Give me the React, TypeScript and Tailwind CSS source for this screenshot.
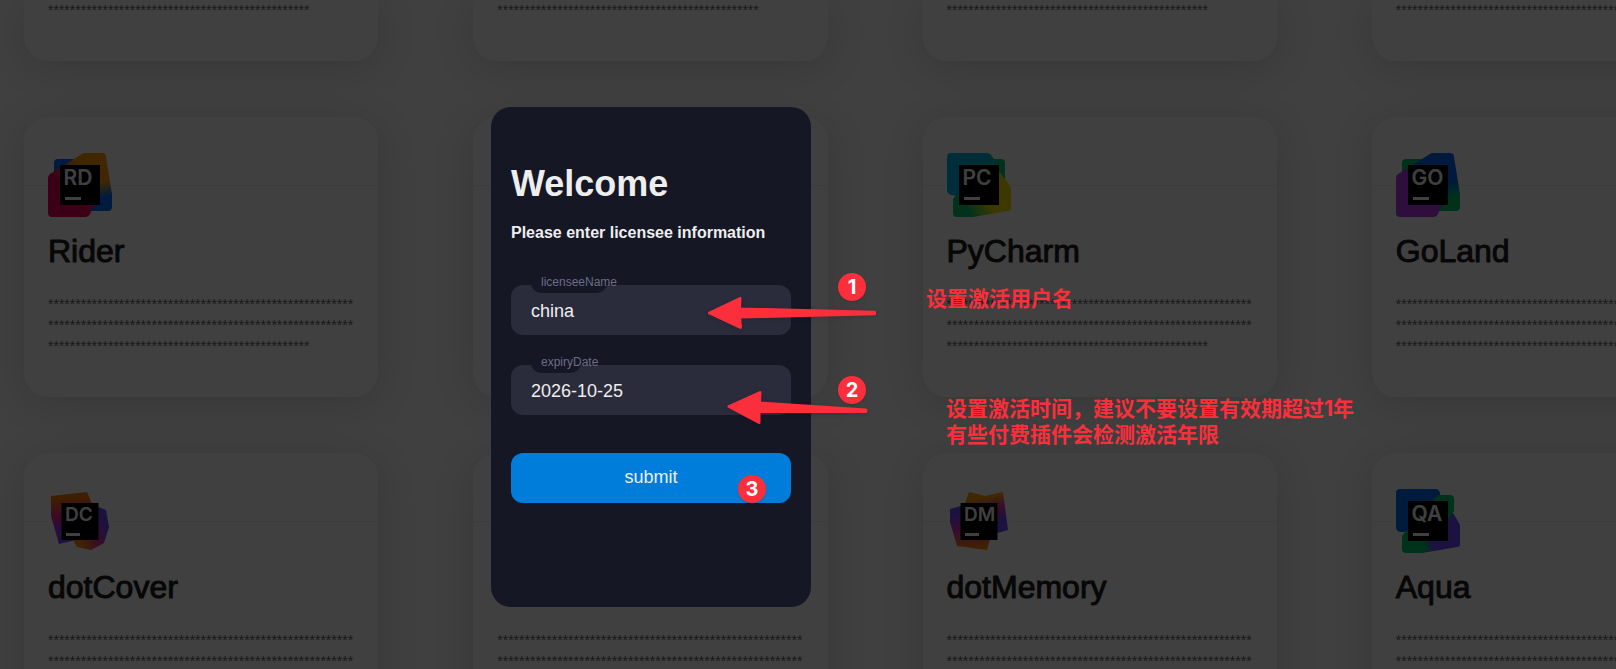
import { useState } from 'react';
import type { ReactNode } from 'react';

type Product = {
  name?: string;
  logo?: ReactNode;
};

function Badge({ letters, small }: { letters: string; small?: boolean }) {
  return small ? (
    <>
      <rect x="13.5" y="14" width="37" height="37" />
      <text x="17" y="32" fontSize="19" fontWeight="600" fill="#fff" fontFamily="Inter, sans-serif">{letters}</text>
      <rect x="18" y="44" width="14" height="3" fill="#fff" />
    </>
  ) : (
    <>
      <rect x="12" y="12" width="40" height="40" />
      <text x="15.500" y="32" fontSize="21" fontWeight="600" fill="#fff" fontFamily="Inter, sans-serif">{letters}</text>
      <rect x="17" y="44" width="16" height="3" fill="#fff" />
    </>
  );
}

function RiderLogo() {
  return (
    <svg viewBox="0 0 64 64" className="size-16">
      <defs>
        <linearGradient id="rd-a" x1="10" y1="56" x2="52" y2="10" gradientUnits="userSpaceOnUse">
          <stop offset=".35" stopColor="#f0005a" />
          <stop offset=".75" stopColor="#ff9a00" />
        </linearGradient>
        <linearGradient id="rd-b" x1="56" y1="20" x2="62" y2="46" gradientUnits="userSpaceOnUse">
          <stop offset=".3" stopColor="#ff9a00" />
          <stop offset=".9" stopColor="#006dff" />
        </linearGradient>
      </defs>
      <path d="M6 10a4 4 0 0 1 4-4h18L24 40H6z" fill="#006dff" />
      <path d="M46 0h8a4 4 0 0 1 4 4l6 37v13a4 4 0 0 1-4 4H40V30z" fill="url(#rd-b)" />
      <path d="M0 25a5 5 0 0 1 2-4L34 1a6 6 0 0 1 3-1h15v40l-10 21a5 5 0 0 1-4 3H4a4 4 0 0 1-4-4z" fill="url(#rd-a)" />
      <Badge letters="RD" />
    </svg>
  );
}

function GoLandLogo() {
  return (
    <svg viewBox="0 0 64 64" className="size-16">
      <defs>
        <linearGradient id="go-a" x1="10" y1="56" x2="52" y2="10" gradientUnits="userSpaceOnUse">
          <stop offset=".4" stopColor="#b33bf0" />
          <stop offset=".7" stopColor="#0066f0" />
        </linearGradient>
        <linearGradient id="go-b" x1="56" y1="20" x2="62" y2="46" gradientUnits="userSpaceOnUse">
          <stop offset=".3" stopColor="#0066f0" />
          <stop offset=".9" stopColor="#00c56b" />
        </linearGradient>
      </defs>
      <path d="M6 10a4 4 0 0 1 4-4h18L24 40H6z" fill="#00c56b" />
      <path d="M46 0h8a4 4 0 0 1 4 4l6 37v13a4 4 0 0 1-4 4H40V30z" fill="url(#go-b)" />
      <path d="M0 25a5 5 0 0 1 2-4L34 1a6 6 0 0 1 3-1h15v40l-10 21a5 5 0 0 1-4 3H4a4 4 0 0 1-4-4z" fill="url(#go-a)" />
      <Badge letters="GO" />
    </svg>
  );
}

function PyCharmLogo() {
  return (
    <svg viewBox="0 0 64 64" className="size-16">
      <defs>
        <linearGradient id="pc-a" x1="16" y1="20" x2="44" y2="40" gradientUnits="userSpaceOnUse">
          <stop offset=".2" stopColor="#00b4e6" />
          <stop offset="1" stopColor="#00c878" />
        </linearGradient>
        <linearGradient id="pc-b" x1="14" y1="56" x2="46" y2="40" gradientUnits="userSpaceOnUse">
          <stop offset=".15" stopColor="#00c870" />
          <stop offset=".8" stopColor="#f0e000" />
        </linearGradient>
      </defs>
      <path d="M40 6h14a4 4 0 0 1 4 4v18H40z" fill="#00c870" />
      <path d="M6 46l6-8 40-20 11 15a6 6 0 0 1 1 3v19a3 3 0 0 1-3 3L26 64H10a4 4 0 0 1-4-4z" fill="url(#pc-b)" />
      <path d="M0 4a4 4 0 0 1 4-4h36a5 5 0 0 1 4 2l8 11-40 30-8-1a5 5 0 0 1-4-5z" fill="url(#pc-a)" />
      <Badge letters="PC" />
    </svg>
  );
}

function AquaLogo() {
  return (
    <svg viewBox="0 0 64 64" className="size-16">
      <defs>
        <linearGradient id="qa-b" x1="14" y1="56" x2="46" y2="48" gradientUnits="userSpaceOnUse">
          <stop offset=".4" stopColor="#00c56b" />
          <stop offset=".7" stopColor="#6b47ff" />
        </linearGradient>
      </defs>
      <path d="M50 24h7l6 10a6 6 0 0 1 1 3v18a3 3 0 0 1-3 3L26 64H10a4 4 0 0 1-4-4V47l6-8z" fill="url(#qa-b)" />
      <path d="M0 4a4 4 0 0 1 4-4h36a5 5 0 0 1 4 4v10L14 40l-6 3H5a5 5 0 0 1-5-4z" fill="#006bef" />
      <path d="M36 12l5-5a4 4 0 0 1 3-1h10a4 4 0 0 1 4 4v12l-6 9z" fill="#00c56b" />
      <Badge letters="QA" />
    </svg>
  );
}

function DotCoverLogo() {
  return (
    <svg viewBox="0 0 64 64" className="size-16">
      <defs>
        <linearGradient id="dc-a" x1="20" y1="2" x2="24" y2="56" gradientUnits="userSpaceOnUse">
          <stop offset=".12" stopColor="#ff7a00" />
          <stop offset=".45" stopColor="#f0288c" />
          <stop offset=".65" stopColor="#a834e0" />
          <stop offset=".9" stopColor="#6b47ff" />
        </linearGradient>
        <linearGradient id="dc-b" x1="28" y1="50" x2="62" y2="38" gradientUnits="userSpaceOnUse">
          <stop offset=".1" stopColor="#ff8a00" />
          <stop offset=".5" stopColor="#f03090" />
          <stop offset=".9" stopColor="#6b47ff" />
        </linearGradient>
      </defs>
      <path d="M3 7l36-4 5 12-16 36-17 4-8-28z" fill="url(#dc-a)" />
      <path d="M50 18l8 3 3 17-5 16-13 7-14-3-4-7 24-14z" fill="url(#dc-b)" />
      <Badge letters="DC" small />
    </svg>
  );
}

function DotMemoryLogo() {
  return (
    <svg viewBox="0 0 64 64" className="size-16">
      <defs>
        <linearGradient id="dm-a" x1="40" y1="4" x2="46" y2="42" gradientUnits="userSpaceOnUse">
          <stop offset=".1" stopColor="#ffa000" />
          <stop offset=".4" stopColor="#e034b0" />
          <stop offset=".75" stopColor="#6b47ff" />
        </linearGradient>
        <linearGradient id="dm-b" x1="16" y1="20" x2="20" y2="60" gradientUnits="userSpaceOnUse">
          <stop offset=".1" stopColor="#6b47ff" />
          <stop offset=".55" stopColor="#e034b0" />
          <stop offset="1" stopColor="#ff8a00" />
        </linearGradient>
      </defs>
      <path d="M22 3l16 4 18-4 5 38-14 4-30-28z" fill="url(#dm-a)" />
      <path d="M3 20l15-4 25 34-3 11-30-4-7-24z" fill="url(#dm-b)" />
      <Badge letters="DM" small />
    </svg>
  );
}

const products: Product[] = [
  { name: 'Rider', logo: <RiderLogo /> },
  {},
  { name: 'PyCharm', logo: <PyCharmLogo /> },
  { name: 'GoLand', logo: <GoLandLogo /> },
  { name: 'dotCover', logo: <DotCoverLogo /> },
  {},
  { name: 'dotMemory', logo: <DotMemoryLogo /> },
  { name: 'Aqua', logo: <AquaLogo /> },
];

const cardShadow = 'shadow-[0_6px_40px_rgba(0,0,0,0.14)]';

function ProductCard({ name, logo }: Product) {
  return (
    <article className={`h-[280px] rounded-3xl bg-white ${cardShadow}`}>
      <div className="h-[69px] border-b border-[#f0f0f0]" />
      <div className="px-6">
        <div className="-mt-[33px] size-16 bg-white">{logo}</div>
        <h2 className="mt-4 h-10 text-[32px] leading-9 font-normal text-[#1c1c1c] [-webkit-text-stroke:1px_#1c1c1c]">{name}</h2>
        <p className="mt-[21px] text-sm leading-[21px] break-all text-[#666]">{'*'.repeat(160)}</p>
      </div>
    </article>
  );
}

type FieldProps = {
  id: string;
  label: string;
  value: string;
  notch: string;
  onChange: (value: string) => void;
};

function Field({ id, label, value, notch, onChange }: FieldProps) {
  return (
    <div className="relative h-[50px]">
      <input
        id={id}
        type="text"
        value={value}
        onChange={(e) => onChange(e.target.value)}
        className="size-full rounded-xl bg-[#2b2c3b] px-5 pt-0.5 text-lg text-[#eee] outline-none"
      />
      <div className={`absolute -top-3 left-5 h-5 rounded-[10px] bg-[#151725] ${notch}`} />
      <label htmlFor={id} className="absolute -top-[11px] left-[30px] text-xs leading-4 text-[#6c6c85]">{label}</label>
    </div>
  );
}

function Marker({ n, className }: { n: number; className: string }) {
  return (
    <span className={`absolute flex size-7 items-center justify-center rounded-full bg-[#fb2f3b] font-[Inter] text-xl font-bold text-white shadow-sm ${className}`}>
      {n}
    </span>
  );
}

export default function App() {
  const [licenseeName, setLicenseeName] = useState('china');
  const [expiryDate, setExpiryDate] = useState('2026-10-25');

  return (
    <div className="relative h-screen overflow-hidden bg-[#fdfdfd] font-['Liberation_Sans',Arial,sans-serif]">
      <main className="-mr-[110px] ml-6 grid grid-cols-4 gap-x-[95px] gap-y-14">
        {[0, 1, 2, 3].map((i) => (
          <div key={i} className={`h-[61px] rounded-b-3xl bg-white px-6 ${cardShadow}`}>
            <p className="text-sm leading-[21px] text-[#666]">{'*'.repeat(48)}</p>
          </div>
        ))}
        {products.map((product, i) => (
          <ProductCard key={i} {...product} />
        ))}
      </main>

      <div className="absolute inset-0 bg-black/75" />

      <form
        onSubmit={(e) => e.preventDefault()}
        className="absolute top-[107px] left-[491px] h-[500px] w-80 rounded-[20px] bg-[#151725] p-5"
      >
        <h1 className="mt-[37px] text-4xl leading-10 font-bold text-[#eee]">Welcome</h1>
        <p className="mt-[19px] text-base leading-5 font-bold text-[#eee]">Please enter licensee information</p>
        <div className="mt-[42px] flex flex-col gap-[30px]">
          <Field id="licenseeName" label="licenseeName" value={licenseeName} onChange={setLicenseeName} notch="w-[76px]" />
          <Field id="expiryDate" label="expiryDate" value={expiryDate} onChange={setExpiryDate} notch="w-[50px]" />
        </div>
        <button type="submit" className="mt-[38px] h-[50px] w-full rounded-xl bg-[#007ddb] pb-0.5 text-lg text-[#eee]">
          submit
        </button>
      </form>

      {/* numbered walkthrough */}
      <svg viewBox="0 0 190 150" className="absolute top-[285px] left-[700px] h-[150px] w-[190px] drop-shadow-sm">
        <g fill="#fb2f3b" stroke="#fb2f3b" strokeWidth="3" strokeLinejoin="round">
          <path d="M9.500 28L40 13.500L39.500 24L174.500 27.200V28.800L39.500 32L40.500 42.500Z" />
          <path d="M29 121.500L60 107.500L59.500 118L165.800 125V126.500L59 126.500L59 137.500Z" />
        </g>
      </svg>
      <Marker n={1} className="top-[273px] left-[838px]" />
      <Marker n={2} className="top-[376px] left-[838px]" />
      <Marker n={3} className="top-[475px] left-[738px]" />
      <p className="absolute top-[286px] left-[926px] font-[Inter,'Noto_Sans_CJK_SC',sans-serif] text-[21px] leading-[26px] font-bold whitespace-nowrap text-[#fb2f3b]">
        设置激活用户名
      </p>
      <p className="absolute top-[396px] left-[946px] font-[Inter,'Noto_Sans_CJK_SC',sans-serif] text-[21px] leading-[26px] font-bold whitespace-nowrap text-[#fb2f3b]">
        设置激活时间，建议不要设置有效期超过1年
        <br />
        有些付费插件会检测激活年限
      </p>
    </div>
  );
}
